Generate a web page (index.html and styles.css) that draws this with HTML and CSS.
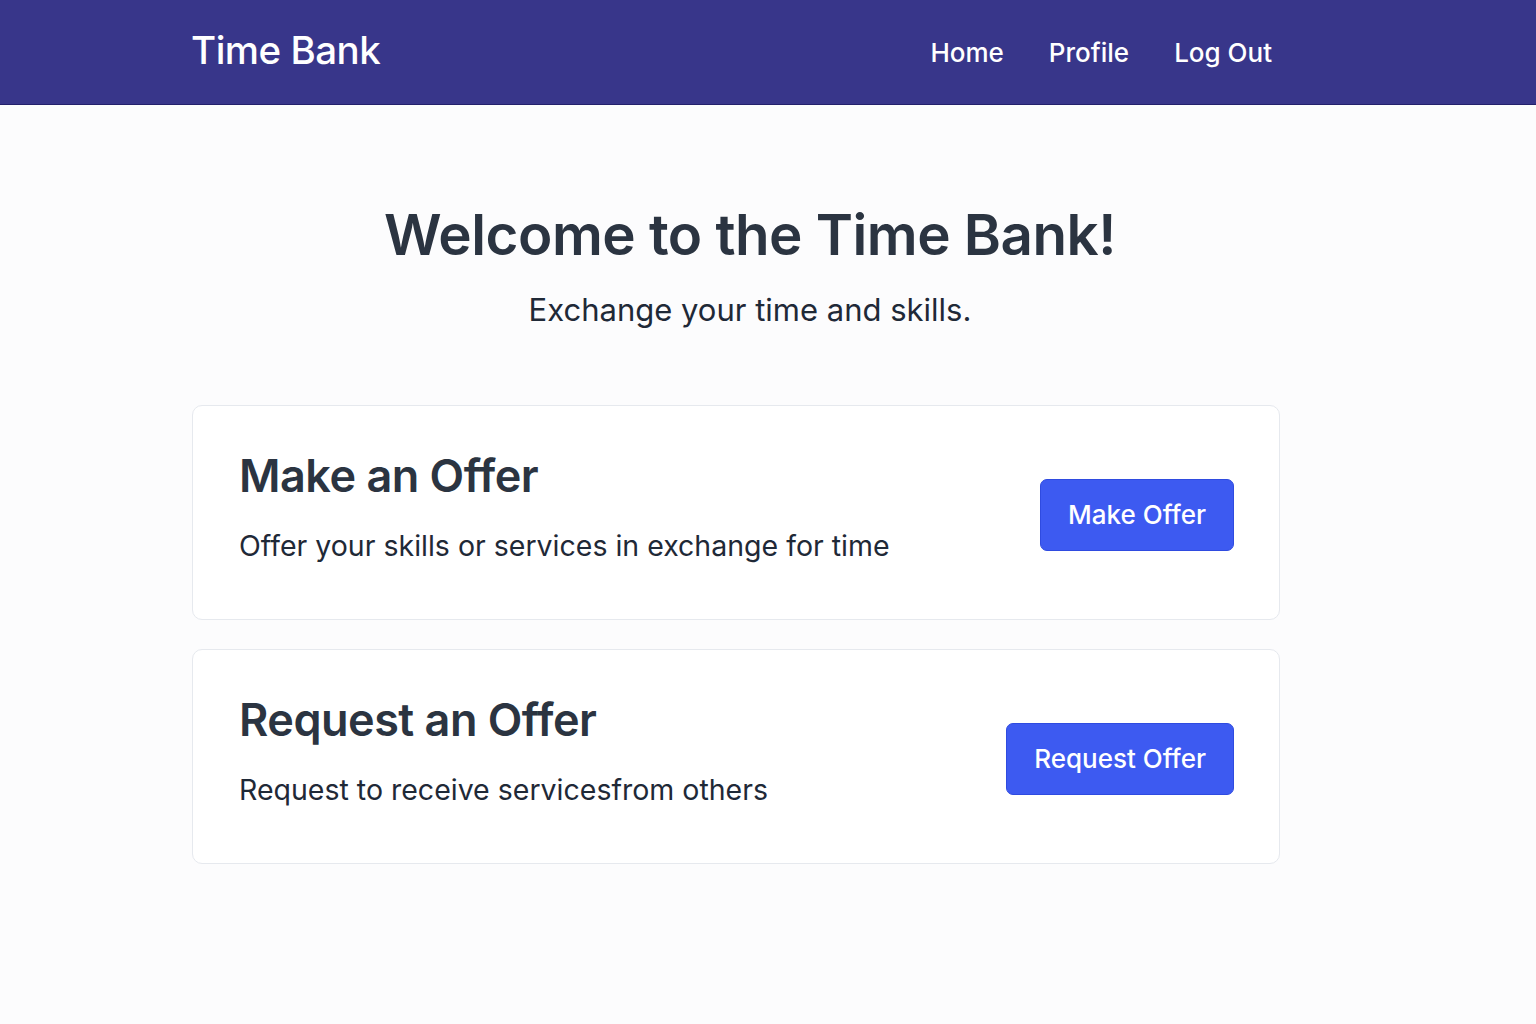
FILE: index.html
```html
<!DOCTYPE html>
<html lang="en">
<head>
<meta charset="utf-8">
<title>Time Bank</title>
<link rel="stylesheet" href="styles.css">
</head>
<body>
<header class="topbar">
  <div class="topbar-inner">
    <a class="brand" href="#">Time Bank</a>
    <nav class="nav">
      <a href="#">Home</a>
      <a href="#">Profile</a>
      <a href="#">Log Out</a>
    </nav>
  </div>
</header>
<main class="main">
  <section class="hero">
    <h1>Welcome to the Time Bank!</h1>
    <p>Exchange your time and skills.</p>
  </section>
  <section class="cards">
    <div class="card">
      <div class="card-text">
        <h2>Make an Offer</h2>
        <p>Offer your skills or services in exchange for time</p>
      </div>
      <button class="btn">Make Offer</button>
    </div>
    <div class="card">
      <div class="card-text">
        <h2>Request an Offer</h2>
        <p>Request to receive servicesfrom others</p>
      </div>
      <button class="btn">Request Offer</button>
    </div>
  </section>
</main>
</body>
</html>
```

FILE: styles.css
```css
* { box-sizing: border-box; }
html, body { margin: 0; padding: 0; }
body {
  font-family: Inter, "Noto Sans", sans-serif;
  background: #fcfcfd;
  color: #1f2937;
  min-height: 1024px;
}
.topbar {
  background: #38368a;
  height: 105px;
  border-bottom: 1px solid #23206b;
}
.topbar-inner {
  max-width: 1152px;
  margin: 0 auto;
  padding-right: 64px;
  height: 100%;
  display: flex;
  align-items: center;
  justify-content: space-between;
}
.brand {
  color: #fff;
  text-decoration: none;
  font-size: 38.5px;
  font-weight: 500;
  letter-spacing: -0.5px;
  margin-left: -1px;
  margin-top: -4px;
}
.nav {
  display: flex;
  gap: 45px;
  padding-right: 8px;
}
.nav a {
  color: #fff;
  text-decoration: none;
  font-size: 26px;
  font-weight: 500;
}
.main {
  max-width: 1152px;
  margin: 0 auto;
  padding-right: 64px;
}
.hero {
  text-align: center;
  padding-top: 96px;
  padding-bottom: 77px;
  padding-left: 28px;
}
.hero h1 {
  margin: 0 0 22px;
  font-size: 56.5px;
  font-weight: 600;
  color: #2b3441;
  letter-spacing: -0.5px;
  line-height: 1.2;
}
.hero p {
  margin: 0;
  font-size: 31px;
  color: #1f2937;
}
.cards {
  display: flex;
  flex-direction: column;
  gap: 29px;
}
.card {
  background: #fff;
  border: 1px solid #e6e9ee;
  border-radius: 10px;
  height: 215px;
  padding: 43px 45px 0 46px;
  display: flex;
  align-items: flex-start;
  justify-content: space-between;
}
.card h2 {
  margin: 0 0 26px;
  font-size: 45px;
  font-weight: 600;
  color: #2b3441;
  letter-spacing: -0.5px;
  line-height: 1.2;
}
.card p {
  margin: 0;
  font-size: 28.5px;
  line-height: 1.2;
  color: #1f2937;
}
.btn {
  align-self: center;
  margin-top: -38px;
  font-family: inherit;
  background: #3d5af1;
  color: #fff;
  border: 1px solid #2f4be0;
  border-radius: 7px;
  height: 72px;
  padding: 0 27px;
  font-size: 26px;
  font-weight: 500;
  cursor: pointer;
}
```
